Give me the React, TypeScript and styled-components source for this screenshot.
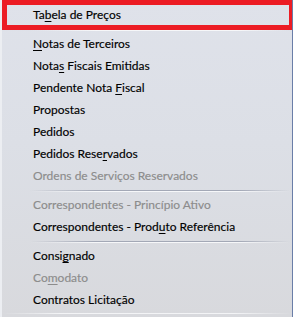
import * as React from 'react';
import styled, { createGlobalStyle } from 'styled-components';

type Item = {
    label: string;
    mnemonic?: number;
    disabled?: boolean;
};

type Entry = Item | 'sep';

const entries: Entry[] = [
    { label: 'Tabela de Preços', mnemonic: 2 },
    'sep',
    { label: 'Notas de Terceiros', mnemonic: 0 },
    { label: 'Notas Fiscais Emitidas', mnemonic: 4 },
    { label: 'Pendente Nota Fiscal', mnemonic: 14 },
    { label: 'Propostas' },
    { label: 'Pedidos' },
    { label: 'Pedidos Reservados', mnemonic: 12 },
    { label: 'Ordens de Serviços Reservados', disabled: true },
    'sep',
    { label: 'Correspondentes - Princípio Ativo', disabled: true },
    { label: 'Correspondentes - Produto Referência', mnemonic: 22 },
    'sep',
    { label: 'Consignado', mnemonic: 5 },
    { label: 'Comodato', mnemonic: 2, disabled: true },
    { label: 'Contratos Licitação' },
];

const Label = ({ label, mnemonic }: Item) => {
    if (mnemonic === undefined) return <>{label}</>;
    return (
        <>
            {label.slice(0, mnemonic)}
            <U>{label[mnemonic]}</U>
            {label.slice(mnemonic + 1)}
        </>
    );
};

const App = () => {
    return (
        <>
            <GlobalStyle />
            <Menu>
                {entries.map((entry, i) =>
                    entry === 'sep'
                        ? <Separator key={i} />
                        : (
                            <Row key={i} $disabled={entry.disabled}>
                                <Label {...entry} />
                            </Row>
                        )
                )}
                <Highlight />
            </Menu>
        </>
    );
};

export default App;

const GlobalStyle = createGlobalStyle`
  html, body {
    margin: 0;
    padding: 0;
    background: #d8d9dd;
  }
`;

const Menu = styled.div`
  position: relative;
  width: 293px;
  height: 317px;
  box-sizing: border-box;
  padding: 4px 0 0 0;
  background: linear-gradient(180deg, #dfe2ea 0%, #dcdfe6 45%, #d8d9dd 100%);
  border-left: 2px solid #eceef2;
  border-right: 1px solid #6a7ea8;
  font-family: 'Segoe UI', Lato, 'Open Sans', sans-serif;
  font-size: 12px;
  overflow: hidden;

  &::after {
    content: '';
    position: absolute;
    left: 0;
    right: 0;
    top: 313px;
    height: 1px;
    background: linear-gradient(90deg, rgba(255,255,255,0) 0%, #f3f4f6 20%, #f3f4f6 80%, rgba(255,255,255,0) 100%);
  }
`;

const Row = styled.div<{ $disabled?: boolean }>`
  height: 22px;
  line-height: 22px;
  padding-left: 31px;
  white-space: nowrap;
  color: ${p => (p.$disabled ? '#8c8c8c' : '#000')};
  -webkit-text-stroke: 0.15px currentColor;
`;

const U = styled.span`
  text-decoration: underline;
  text-underline-offset: 2px;
`;

const Separator = styled.div`
  height: 7px;
  margin-left: 28px;
  margin-right: 2px;
  display: flex;
  flex-direction: column;
  justify-content: center;

  &::before,
  &::after {
    content: '';
    display: block;
    height: 1px;
  }
  &::before {
    background: linear-gradient(90deg, rgba(160,165,180,0) 0%, #a3a8b6 25%, #a3a8b6 80%, rgba(160,165,180,0) 100%);
  }
  &::after {
    background: linear-gradient(90deg, rgba(255,255,255,0) 0%, #f6f7f9 25%, #f6f7f9 80%, rgba(255,255,255,0) 100%);
  }
`;

const Highlight = styled.div`
  position: absolute;
  left: 0;
  top: 0;
  width: 292px;
  height: 30px;
  box-sizing: border-box;
  border: 5px solid #ec1c24;
`;
